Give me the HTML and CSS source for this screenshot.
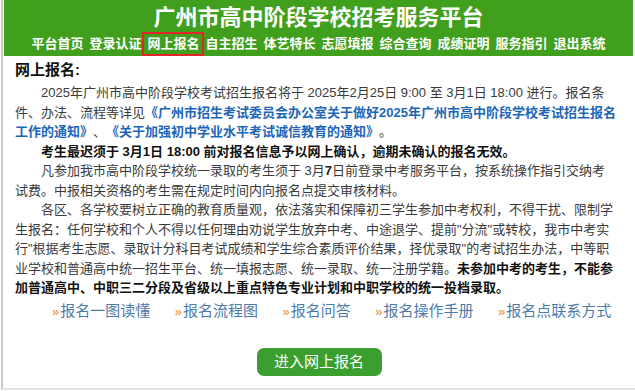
FILE: index.html
```html
<!DOCTYPE html>
<html lang="zh-CN">
<head>
<meta charset="utf-8">
<title>广州市高中阶段学校招考服务平台</title>
<link rel="stylesheet" href="styles.css">
</head>
<body>
<div class="page">
  <header class="header">
    <h1 class="site-title">广州市高中阶段学校招考服务平台</h1>
    <nav class="nav">
      <a class="nav-item">平台首页</a>
      <a class="nav-item">登录认证</a>
      <a class="nav-item active">网上报名</a>
      <a class="nav-item">自主招生</a>
      <a class="nav-item">体艺特长</a>
      <a class="nav-item">志愿填报</a>
      <a class="nav-item">综合查询</a>
      <a class="nav-item">成绩证明</a>
      <a class="nav-item">服务指引</a>
      <a class="nav-item">退出系统</a>
    </nav>
  </header>
  <main class="content">
    <h2 class="section-title">网上报名:</h2>
    <p class="para">2025年广州市高中阶段学校考试招生报名将于 2025年2月25日 9:00 至 3月1日 18:00 进行。报名条<br>件、办法、流程等详见<a class="doc-link">《广州市招生考试委员会办公室关于做好2025年广州市高中阶段学校考试招生报名<br>工作的通知》</a>、<a class="doc-link">《关于加强初中学业水平考试诚信教育的通知》</a>。</p>
    <p class="para strong">考生最迟须于 3月1日 18:00 前对报名信息予以网上确认，逾期未确认的报名无效。</p>
    <p class="para">凡参加我市高中阶段学校统一录取的考生须于 3月<b class="num">7</b>日前登录中考服务平台，按系统操作指引交纳考<br>试费。中报相关资格的考生需在规定时间内向报名点提交审核材料。</p>
    <p class="para">各区、各学校要树立正确的教育质量观，依法落实和保障初三学生参加中考权利，不得干扰、限制学<br>生报名：任何学校和个人不得以任何理由劝说学生放弃中考、中途退学、提前"分流"或转校，我市中考实<br>行"根据考生志愿、录取计分科目考试成绩和学生综合素质评价结果，择优录取"的考试招生办法，中等职<br>业学校和普通高中统一招生平台、统一填报志愿、统一录取、统一注册学籍。<b class="em">未参加中考的考生，不能参<br>加普通高中、中职三二分段及省级以上重点特色专业计划和中职学校的统一投档录取。</b></p>
    <ul class="quick-links">
      <li><a class="quick-link"><span class="arrow">»</span>报名一图读懂</a></li>
      <li><a class="quick-link"><span class="arrow">»</span>报名流程图</a></li>
      <li><a class="quick-link"><span class="arrow">»</span>报名问答</a></li>
      <li><a class="quick-link"><span class="arrow">»</span>报名操作手册</a></li>
      <li><a class="quick-link"><span class="arrow">»</span>报名点联系方式</a></li>
    </ul>
    <div class="actions">
      <a class="enter-btn">进入网上报名</a>
    </div>
  </main>
</div>
</body>
</html>
```

FILE: styles.css
```css
* { box-sizing: border-box; }
html, body { margin: 0; padding: 0; background: #fff; }
body {
  font-family: "Liberation Sans", "Noto Sans CJK SC", sans-serif;
  color: #333;
  text-spacing-trim: space-all;
}
.page {
  width: 634px;
  height: 390px;
  margin-left: 1px;
  border-left: 2px solid #c9c9c9;
  border-bottom: 2px solid #e2e2e2;
  overflow: hidden;
}
.header {
  margin-left: 1px;
  width: 629px;
  height: 56px;
  background: #40a01d;
  padding-top: 4px;
  display: flex;
  flex-direction: column;
  align-items: center;
}
.site-title {
  margin: 0;
  font-size: 22px;
  line-height: 28px;
  font-weight: 700;
  color: #fff;
}
.nav {
  display: flex;
  justify-content: center;
}
.nav-item {
  display: block;
  font-size: 13px;
  font-weight: 700;
  line-height: 20px;
  color: #fff;
  padding: 0 1px;
  border: 2px solid transparent;
}
.nav-item.active {
  border-color: #e0262a;
  padding: 0 3px;
  margin: 0 -2px;
}
.content {
  padding: 4px 0 0 12px;
}
.section-title {
  margin: 0 0 3px;
  font-size: 15px;
  line-height: 20px;
  font-weight: 700;
  color: #111;
}
.para {
  margin: 0;
  font-size: 13px;
  line-height: 19.5px;
  text-indent: 26px;
  white-space: nowrap;
  color: #3a3a3a;
}
.para.strong, .para .em {
  font-weight: 700;
  color: #111;
}
.para .num { font-weight: 700; color: #222; }
.doc-link {
  color: #1c66b8;
  font-weight: 700;
}
.quick-links {
  list-style: none;
  margin: 2px 0 0;
  padding: 0 0 0 37px;
  display: flex;
  gap: 24.5px;
}
.quick-link {
  font-size: 15px;
  line-height: 22px;
  color: #4a7bab;
}
.arrow {
  color: #f0882a;
  font-size: 13px;
  margin-right: 1px;
}
.actions {
  display: flex;
  justify-content: center;
  margin-top: 25px;
  padding-right: 12px;
}
.enter-btn {
  display: block;
  width: 125px;
  height: 28px;
  line-height: 28px;
  text-align: center;
  background: #3b9f2f;
  color: #fff;
  font-size: 15px;
  border-radius: 7px;
}
```
